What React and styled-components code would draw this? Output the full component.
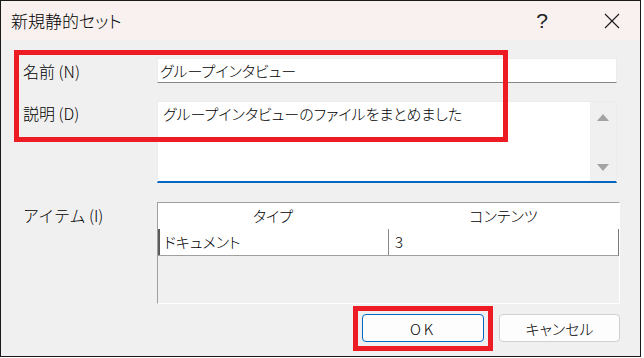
import React from 'react';
import styled, { createGlobalStyle } from 'styled-components';

const Global = createGlobalStyle`
  html, body { margin: 0; padding: 0; background: #fff; }
  body {
    font-family: "Noto Sans CJK JP", "Noto Sans", sans-serif;
    font-size: 16px;
    font-weight: 300;
    color: #000;
  }
`;

const Window = styled.div`
  position: relative;
  width: 641px;
  height: 357px;
  box-sizing: border-box;
  border: 1px solid #1a1a1a;
  background: #f0f0f0;
  display: flex;
  flex-direction: column;
`;

const TitleBar = styled.div`
  height: 39px;
  background: #f9f1f0;
  display: flex;
  align-items: center;
  padding-left: 10px;
`;

const TitleText = styled.div`
  flex: 1;
  font-size: 17px;
  font-feature-settings: "palt";
`;

const TitleButton = styled.div`
  width: 56px;
  height: 39px;
  display: flex;
  align-items: center;
  justify-content: center;
  margin-left: ${(p) => p.$gap || 0}px;
  font-family: "Liberation Sans", sans-serif;
  font-size: 21px;
  color: #222;
`;

const Body = styled.div`
  position: relative;
  flex: 1;
  padding: 18px 19px 0 22px;
  display: flex;
  flex-direction: column;
`;

const Row = styled.div`
  display: grid;
  grid-template-columns: 134px 1fr;
  align-items: ${(p) => p.$align || 'start'};
  margin-top: ${(p) => p.$top || 0}px;
`;

const Label = styled.div`
  line-height: ${(p) => p.$lh || 24}px;
  white-space: nowrap;
`;

const Input = styled.div`
  width: 460px;
  height: 25px;
  box-sizing: border-box;
  background: #fff;
  border: 1px solid #ececec;
  border-bottom: 1px solid #868686;
  padding-left: 2px;
  line-height: 23px;
  font-size: 15px;
  font-feature-settings: "palt";
`;

const TextArea = styled.div`
  width: 460px;
  height: 82px;
  box-sizing: border-box;
  background: #fff;
  border: 1px solid #ececec;
  border-bottom: 2px solid #0067c0;
  display: flex;
`;

const TextBody = styled.div`
  flex: 1;
  padding-left: 5px;
  line-height: 23px;
  font-size: 15px;
  font-feature-settings: "palt";
`;

const ScrollBar = styled.div`
  width: 26px;
  background: #f0f0f0;
  display: flex;
  flex-direction: column;
  justify-content: space-between;
  align-items: center;
  padding: 12px 0 10px;
`;

const Table = styled.div`
  width: 463px;
  height: 102px;
  box-sizing: border-box;
  border-top: 1px solid #a0a0a0;
  border-left: 1px solid #a0a0a0;
  border-right: 1px solid #fff;
  border-bottom: 1px solid #fff;
  background: #f0f0f0;
  display: flex;
  flex-direction: column;
`;

const HeaderRow = styled.div`
  display: grid;
  grid-template-columns: 230px 1fr;
  height: 26px;
  background: #fff;
`;

const HeaderCell = styled.div`
  text-align: center;
  line-height: 26px;
  font-size: 15px;
  font-feature-settings: "palt";
`;

const DataRow = styled.div`
  display: grid;
  grid-template-columns: 230px 1fr;
  height: 26px;
  background: #fff;
  border-bottom: 1px solid #a0a0a0;
  border-right: 1px solid #7a7a7a;
`;

const DataCell = styled.div`
  border-left: ${(p) => (p.$first ? '2px solid #5a5a5a' : '1px solid #8a8a8a')};
  padding-left: ${(p) => (p.$first ? 4 : 6)}px;
  line-height: 25px;
  font-size: 15px;
  font-feature-settings: "palt";
`;

const Buttons = styled.div`
  display: flex;
  justify-content: flex-end;
  gap: 15px;
  margin-top: 10px;
  margin-right: 1px;
`;

const BtnWrap = styled.div`
  position: relative;
`;

const Button = styled.div`
  width: ${(p) => p.$w}px;
  height: 28px;
  box-sizing: border-box;
  border-radius: 4px;
  background: #fdfdfd;
  border: 1px solid ${(p) => (p.$primary ? '#0067c0' : '#d0d0d0')};
  display: flex;
  align-items: center;
  justify-content: center;
  font-size: 15px;
  font-feature-settings: "palt";
  letter-spacing: ${(p) => (p.$primary ? 3 : 0)}px;
`;

const Highlight = styled.div`
  position: absolute;
  box-sizing: border-box;
  border: 5px solid #ed1c24;
  pointer-events: none;
`;

const FieldHighlight = styled(Highlight)`
  left: 13px;
  top: 49px;
  width: 494px;
  height: 92px;
`;

const ButtonHighlight = styled(Highlight)`
  left: -9px;
  right: -9px;
  top: -8px;
  bottom: -9px;
`;

const Arrow = ({ up }) => (
  <svg width="12" height="7" viewBox="0 0 12 7">
    <polygon points={up ? '6,0 12,7 0,7' : '0,0 12,0 6,7'} fill="#a3a3a3" />
  </svg>
);

const CloseIcon = () => (
  <svg width="16" height="16" viewBox="0 0 16 16">
    <path d="M1 1 L15 15 M15 1 L1 15" stroke="#1a1a1a" strokeWidth="1.1" />
  </svg>
);

export default function App() {
  return (
    <>
      <Global />
      <Window>
        <TitleBar>
          <TitleText>新規静的セット</TitleText>
          <TitleButton>?</TitleButton>
          <TitleButton $gap={14}>
            <CloseIcon />
          </TitleButton>
        </TitleBar>
        <Body>
          <Row $align="center">
            <Label>名前 (N)</Label>
            <Input>グループインタビュー</Input>
          </Row>
          <Row $top={18}>
            <Label>説明 (D)</Label>
            <TextArea>
              <TextBody>グループインタビューのファイルをまとめました</TextBody>
              <ScrollBar>
                <Arrow up />
                <Arrow />
              </ScrollBar>
            </TextArea>
          </Row>
          <Row $top={19}>
            <Label $lh={26}>アイテム (I)</Label>
            <Table>
              <HeaderRow>
                <HeaderCell>タイプ</HeaderCell>
                <HeaderCell>コンテンツ</HeaderCell>
              </HeaderRow>
              <DataRow>
                <DataCell $first>ドキュメント</DataCell>
                <DataCell>3</DataCell>
              </DataRow>
            </Table>
          </Row>
          <Buttons>
            <BtnWrap>
              <Button $primary $w={122}>OK</Button>
              <ButtonHighlight />
            </BtnWrap>
            <Button $w={121}>キャンセル</Button>
          </Buttons>
        </Body>
        <FieldHighlight />
      </Window>
    </>
  );
}
